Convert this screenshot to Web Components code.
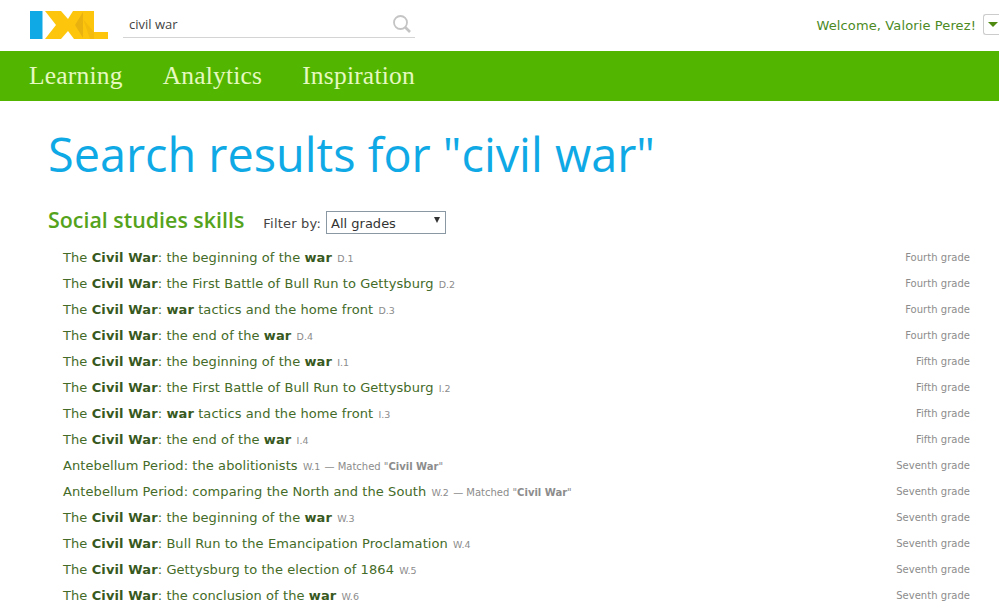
<!DOCTYPE html>
<html>
<head>
<meta charset="utf-8">
<title>IXL search results</title>
<style>
    html, body { margin: 0; padding: 0; background: #fff; overflow: hidden; }
    body { font-family: "DejaVu Sans", Verdana, sans-serif; }
    ixl-nav a { letter-spacing: .2px; }
</style>
</head>
<body>
<ixl-header name="Valorie Perez" query="civil war"></ixl-header>
<ixl-nav>
    <a>Learning</a>
    <a>Analytics</a>
    <a>Inspiration</a>
</ixl-nav>
<search-results query="civil war" section="Social studies skills"></search-results>

<script>
class IxlHeader extends HTMLElement {
    connectedCallback() {
        this.attachShadow({ mode: 'open' });
        this.shadowRoot.innerHTML = `
            <style>
                :host {
                    display: flex;
                    align-items: flex-start;
                    height: 51px;
                    box-sizing: border-box;
                    padding-left: 30px;
                }
                .logo { margin-top: 11px; display: block; }
                .search {
                    display: flex;
                    align-items: center;
                    justify-content: space-between;
                    width: 292px;
                    height: 27px;
                    margin: 11px 0 0 15px;
                    box-sizing: border-box;
                    padding: 0 3px 0 6px;
                    border-bottom: 1px solid #d4d4d4;
                    font: 13px "Open Sans", sans-serif;
                    color: #444;
                }
                .welcome {
                    margin-left: auto;
                    display: flex;
                    align-items: center;
                    gap: 7px;
                    margin-top: 15px;
                    font-size: 13px;
                    letter-spacing: .12px;
                    color: #4c8a1f;
                }
                .drop {
                    width: 16px;
                    height: 21px;
                    margin-top: -1px;
                    box-sizing: border-box;
                    border: 1px solid #ccc;
                    border-right: 0;
                    border-radius: 3px 0 0 3px;
                    display: flex;
                    align-items: center;
                    justify-content: center;
                    padding-left: 2px;
                }
                .drop i {
                    border: 5px solid transparent;
                    border-top: 5px solid #4f8a10;
                    border-bottom: 0;
                }
            </style>
            <svg class="logo" width="78" height="28" viewBox="0 0 78 28">
                <rect x="0" y="0" width="12.500" height="28" fill="#0fa9e6"/>
                <path d="M15 0H31L38 8 43 0H54V28H44L38 20 31 28H15L26 14Z" fill="#fdc60d"/>
                <path d="M53 0H64V21H78V28H53Z" fill="#fdc60d"/>
                <path d="M53 1V27L45 14Z" fill="#e9b20f"/>
                <path d="M53 8L64 21V28H60Z" fill="#f5bb0c"/>
            </svg>
            <div class="search">
                <span>${this.getAttribute('query')}</span>
                <svg width="20" height="20" viewBox="0 0 20 20" fill="none" stroke="#c4c4c4">
                    <circle cx="8.500" cy="8.500" r="6.500" stroke-width="1.800"/>
                    <path d="M13 13L18 18" stroke-width="2.600"/>
                </svg>
            </div>
            <div class="welcome">
                <span>Welcome, ${this.getAttribute('name')}!</span>
                <div class="drop"><i></i></div>
            </div>
        `;
    }
}

class IxlNav extends HTMLElement {
    connectedCallback() {
        this.attachShadow({ mode: 'open' });
        this.shadowRoot.innerHTML = `
            <style>
                :host {
                    display: flex;
                    align-items: center;
                    gap: 40px;
                    height: 50px;
                    padding-left: 29px;
                    background: #52b600;
                    color: #e6f9c0;
                    font: 25.500px "Liberation Serif", serif;
                }
            </style>
            <slot></slot>
        `;
    }
}

class SkillRow extends HTMLElement {
    connectedCallback() {
        this.attachShadow({ mode: 'open' });
        const matched = this.hasAttribute('matched')
            ? ` <span class="match">— Matched "<b>Civil War</b>"</span>`
            : '';
        this.shadowRoot.innerHTML = `
            <style>
                :host {
                    display: flex;
                    justify-content: space-between;
                    align-items: baseline;
                    height: 26px;
                    line-height: 26px;
                    font-size: 13px;
                    letter-spacing: .08px;
                    color: #446b28;
                }
                ::slotted(b) { color: #38591e; letter-spacing: .12px; }
                .code, .match { font-size: 9.500px; color: #8c8c8c; letter-spacing: 0; }
                .match { font-size: 10px; }
                .code { margin-left: 1px; }
                .grade { align-self: flex-start; line-height: 25px; font-size: 10px; letter-spacing: .03px; color: #8c8c8c; }
            </style>
            <span><slot></slot> <span class="code">${this.getAttribute('code')}</span>${matched}</span>
            <span class="grade">${this.getAttribute('grade')}</span>
        `;
    }
}

const CW = '<b>Civil War</b>';
const SKILLS = [
    [`The ${CW}: the beginning of the <b>war</b>`, 'D.1', 'Fourth grade'],
    [`The ${CW}: the First Battle of Bull Run to Gettysburg`, 'D.2', 'Fourth grade'],
    [`The ${CW}: <b>war</b> tactics and the home front`, 'D.3', 'Fourth grade'],
    [`The ${CW}: the end of the <b>war</b>`, 'D.4', 'Fourth grade'],
    [`The ${CW}: the beginning of the <b>war</b>`, 'I.1', 'Fifth grade'],
    [`The ${CW}: the First Battle of Bull Run to Gettysburg`, 'I.2', 'Fifth grade'],
    [`The ${CW}: <b>war</b> tactics and the home front`, 'I.3', 'Fifth grade'],
    [`The ${CW}: the end of the <b>war</b>`, 'I.4', 'Fifth grade'],
    ['Antebellum Period: the abolitionists', 'W.1', 'Seventh grade', true],
    ['Antebellum Period: comparing the North and the South', 'W.2', 'Seventh grade', true],
    [`The ${CW}: the beginning of the <b>war</b>`, 'W.3', 'Seventh grade'],
    [`The ${CW}: Bull Run to the Emancipation Proclamation`, 'W.4', 'Seventh grade'],
    [`The ${CW}: Gettysburg to the election of 1864`, 'W.5', 'Seventh grade'],
    [`The ${CW}: the conclusion of the <b>war</b>`, 'W.6', 'Seventh grade'],
];

class SearchResults extends HTMLElement {
    connectedCallback() {
        this.attachShadow({ mode: 'open' });
        this.shadowRoot.innerHTML = `
            <style>
                :host { display: block; padding: 0 29px 0 48px; }
                h1 {
                    margin: 0;
                    padding-top: 25px;
                    font: 400 46.800px/56px "Open Sans", sans-serif;
                    color: #0fa9e6;
                }
                .head {
                    display: flex;
                    align-items: center;
                    margin-top: 21px;
                    height: 34px;
                }
                h2 {
                    margin: 0 0 2px;
                    font: 600 21.400px "Open Sans", sans-serif;
                    color: #55a31c;
                }
                .filter {
                    margin: 4px 0 0 19px;
                    font-size: 13px;
                    letter-spacing: .2px;
                    color: #444;
                    display: flex;
                    align-items: center;
                    gap: 5px;
                }
                .filter > span { padding-top: 2px; }
                .select {
                    width: 120px;
                    height: 23px;
                    box-sizing: border-box;
                    border: 1px solid #8a98a4;
                    padding: 2px 5px 0 4px;
                    display: flex;
                    justify-content: space-between;
                    align-items: center;
                    letter-spacing: 0;
                    color: #333;
                }
                .select i { border: 3px solid transparent; border-top: 6px solid #333; border-bottom: 0; margin: -6px 0 0; }
                .list { padding: 8px 0 0 15px; }
            </style>
            <h1>Search results for "${this.getAttribute('query')}"</h1>
            <div class="head">
                <h2>${this.getAttribute('section')}</h2>
                <div class="filter"><span>Filter by:</span>
                    <div class="select"><span>All grades</span><i></i></div>
                </div>
            </div>
            <div class="list"></div>
        `;
        const list = this.shadowRoot.querySelector('.list');
        SKILLS.forEach(([title, code, grade, matched]) => {
            const row = document.createElement('skill-row');
            row.setAttribute('code', code);
            row.setAttribute('grade', grade);
            if (matched) row.setAttribute('matched', '');
            row.innerHTML = title;
            list.appendChild(row);
        });
    }
}

customElements.define('ixl-header', IxlHeader);
customElements.define('ixl-nav', IxlNav);
customElements.define('skill-row', SkillRow);
customElements.define('search-results', SearchResults);
</script>
</body>
</html>
